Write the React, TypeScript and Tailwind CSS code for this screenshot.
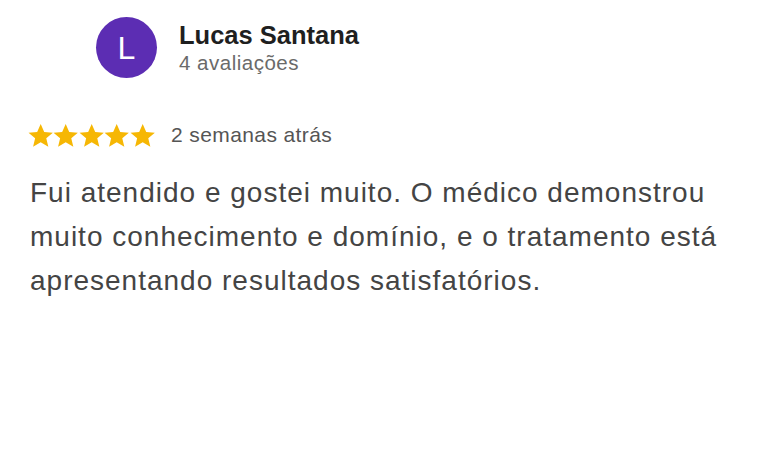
export default function App() {
  const star = (
    <svg viewBox="1 1 22 22" className="w-[25.4px] h-[25px]" fill="#f6b704">
      <path d="M12 1.8l3.1 7.1 7.6.6-5.8 5 1.8 7.5L12 18l-6.7 4 1.8-7.5-5.8-5 7.6-.6z" />
    </svg>
  );
  return (
    <div className="w-[768px] h-[475px] bg-white font-['Liberation_Sans',Arial,sans-serif] overflow-hidden">
      <div className="flex items-center pl-[96px] pt-[17px]">
        <div className="w-[61px] h-[61px] rounded-full bg-[#5c2db3] flex items-center justify-center text-white text-[32px] leading-none">
          L
        </div>
        <div className="ml-[22px] flex flex-col">
          <div className="text-[25.5px] font-bold text-[#1f1f1f] leading-[30px]">Lucas Santana</div>
          <div className="text-[20.5px] tracking-[0.5px] text-[#6a6a6a] leading-[26px]">4 avaliações</div>
        </div>
      </div>
      <div className="flex items-center pl-[28px] mt-[44px]">
        <div className="flex">{star}{star}{star}{star}{star}</div>
        <span className="ml-[16px] text-[21px] tracking-[0.4px] text-[#555] leading-[26px]">2 semanas atrás</span>
      </div>
      <p className="pl-[30px] pr-[38px] mt-[23px] text-[28px] tracking-[1px] leading-[44px] text-[#444]">
        Fui atendido e gostei muito. O médico demonstrou muito conhecimento e domínio, e o tratamento está apresentando resultados satisfatórios.
      </p>
    </div>
  );
}
